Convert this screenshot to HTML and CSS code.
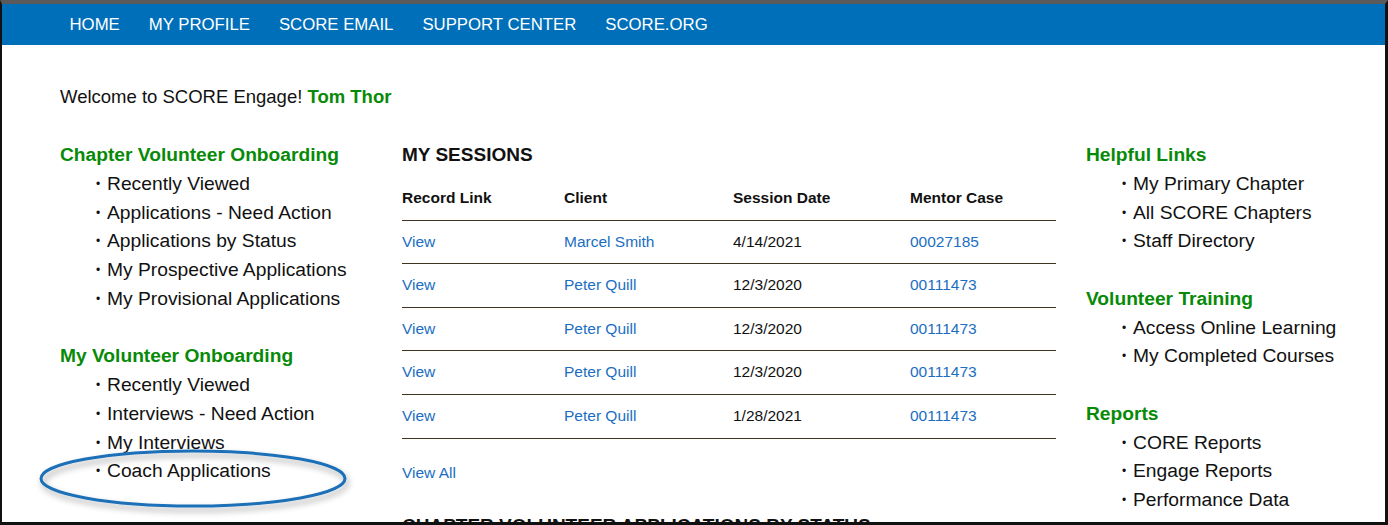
FILE: index.html
```html
<!DOCTYPE html>
<html>
    <head>
        <title>SCORE Engage</title>
        <meta charset="utf-8">
        <link rel="stylesheet" href="styles.css">
    </head>
    <body>
        <div class="frame">
            <ul class="nav">
                <li><a href="#">HOME</a></li>
                <li><a href="#">MY PROFILE</a></li>
                <li><a href="#">SCORE EMAIL</a></li>
                <li><a href="#">SUPPORT CENTER</a></li>
                <li><a href="#">SCORE.ORG</a></li>
            </ul>
            <div class="content">
                <p class="welcome">Welcome to SCORE Engage! <span class="user">Tom Thor</span></p>
                <div class="columns">
                    <div class="side">
                        <div class="group">
                            <h3>Chapter Volunteer Onboarding</h3>
                            <ul>
                                <li>Recently Viewed</li>
                                <li>Applications - Need Action</li>
                                <li>Applications by Status</li>
                                <li>My Prospective Applications</li>
                                <li>My Provisional Applications</li>
                            </ul>
                        </div>
                        <div class="group">
                            <h3>My Volunteer Onboarding</h3>
                            <ul>
                                <li>Recently Viewed</li>
                                <li>Interviews - Need Action</li>
                                <li>My Interviews</li>
                                <li class="marked">Coach Applications</li>
                            </ul>
                        </div>
                        <div class="group">
                            <h3>Event Management</h3>
                        </div>
                    </div>
                    <div class="main">
                        <h2>MY SESSIONS</h2>
                        <table class="sessions">
                            <tr>
                                <th class="c1">Record Link</th>
                                <th class="c2">Client</th>
                                <th class="c3">Session Date</th>
                                <th>Mentor Case</th>
                            </tr>
                            <tr>
                                <td><a href="#">View</a></td>
                                <td><a href="#">Marcel Smith</a></td>
                                <td>4/14/2021</td>
                                <td><a href="#">00027185</a></td>
                            </tr>
                            <tr>
                                <td><a href="#">View</a></td>
                                <td><a href="#">Peter Quill</a></td>
                                <td>12/3/2020</td>
                                <td><a href="#">00111473</a></td>
                            </tr>
                            <tr>
                                <td><a href="#">View</a></td>
                                <td><a href="#">Peter Quill</a></td>
                                <td>12/3/2020</td>
                                <td><a href="#">00111473</a></td>
                            </tr>
                            <tr>
                                <td><a href="#">View</a></td>
                                <td><a href="#">Peter Quill</a></td>
                                <td>12/3/2020</td>
                                <td><a href="#">00111473</a></td>
                            </tr>
                            <tr>
                                <td><a href="#">View</a></td>
                                <td><a href="#">Peter Quill</a></td>
                                <td>1/28/2021</td>
                                <td><a href="#">00111473</a></td>
                            </tr>
                        </table>
                        <p class="viewall"><a href="#">View All</a></p>
                        <h2 class="next">CHAPTER VOLUNTEER APPLICATIONS BY STATUS</h2>
                    </div>
                    <div class="side">
                        <div class="group">
                            <h3>Helpful Links</h3>
                            <ul>
                                <li>My Primary Chapter</li>
                                <li>All SCORE Chapters</li>
                                <li>Staff Directory</li>
                            </ul>
                        </div>
                        <div class="group">
                            <h3>Volunteer Training</h3>
                            <ul>
                                <li>Access Online Learning</li>
                                <li>My Completed Courses</li>
                            </ul>
                        </div>
                        <div class="group">
                            <h3>Reports</h3>
                            <ul>
                                <li>CORE Reports</li>
                                <li>Engage Reports</li>
                                <li>Performance Data</li>
                            </ul>
                        </div>
                    </div>
                </div>
            </div>
            <!-- annotation ring drawn over the screenshot -->
            <svg class="ring" width="330" height="90" viewBox="0 0 330 90">
                <defs>
                    <filter id="shade" x="-10%" y="-30%" width="120%" height="160%">
                        <feDropShadow dx="2" dy="4" stdDeviation="3" flood-color="#000" flood-opacity="0.35"/>
                    </filter>
                </defs>
                <ellipse cx="164" cy="46.5" rx="152" ry="27.5" fill="none" stroke="#1c6fb7" stroke-width="3" filter="url(#shade)"/>
            </svg>
        </div>
    </body>
</html>
```

FILE: styles.css
```css
* {
    margin: 0;
    padding: 0;
}
html, body {
    background: #fff;
}
li {
    list-style: none;
}
a {
    text-decoration: none;
    color: #1b6ec2;
}
.frame {
    position: relative;
    width: 1388px;
    height: 525px;
    box-sizing: border-box;
    border-top: 4px solid #5a5a5a;
    border-left: 2px solid #111;
    border-right: 3px solid #111;
    border-bottom: 3px solid #111;
    overflow: hidden;
    font-family: "Liberation Sans", Arial, sans-serif;
    color: #111;
}
.nav {
    display: flex;
    height: 41px;
    background-color: #006fb9;
    padding-left: 53px;
}
.nav li a {
    display: block;
    padding: 0 14.5px;
    line-height: 41px;
    font-size: 16.75px;
    color: #fff;
}
.content {
    padding: 37px 0 0 58px;
}
.welcome {
    font-size: 18.5px;
    line-height: 29px;
    margin-bottom: 30px;
}
.user {
    color: #078a07;
    font-weight: bold;
}
.columns {
    display: grid;
    grid-template-columns: 312px 654px 1fr;
    column-gap: 30px;
}
.group {
    margin-bottom: 28.75px;
}
.group h3 {
    font-size: 19.2px;
    line-height: 28.75px;
    color: #078a07;
}
.group li {
    font-size: 19.25px;
    line-height: 28.75px;
    padding-left: 47px;
    position: relative;
}
.group li::before {
    content: "\2022";
    position: absolute;
    left: 36px;
    font-size: 12px;
}
.main h2 {
    font-size: 19px;
    line-height: 28px;
}
.sessions {
    width: 100%;
    border-collapse: collapse;
    margin-top: 8px;
    font-size: 15.5px;
}
.sessions th, .sessions td {
    text-align: left;
    padding: 12px 0;
    line-height: 18.6px;
    border-bottom: 1px solid #3e3521;
    font-weight: normal;
}
.sessions th {
    font-weight: bold;
}
.sessions .c1 {
    width: 162px;
}
.sessions .c2 {
    width: 169px;
}
.sessions .c3 {
    width: 177px;
}
.viewall {
    font-size: 15.5px;
    line-height: 29px;
    margin-top: 19px;
}
.main .next {
    margin-top: 25px;
}
.ring {
    position: absolute;
    left: 27px;
    top: 428px;
}
```
